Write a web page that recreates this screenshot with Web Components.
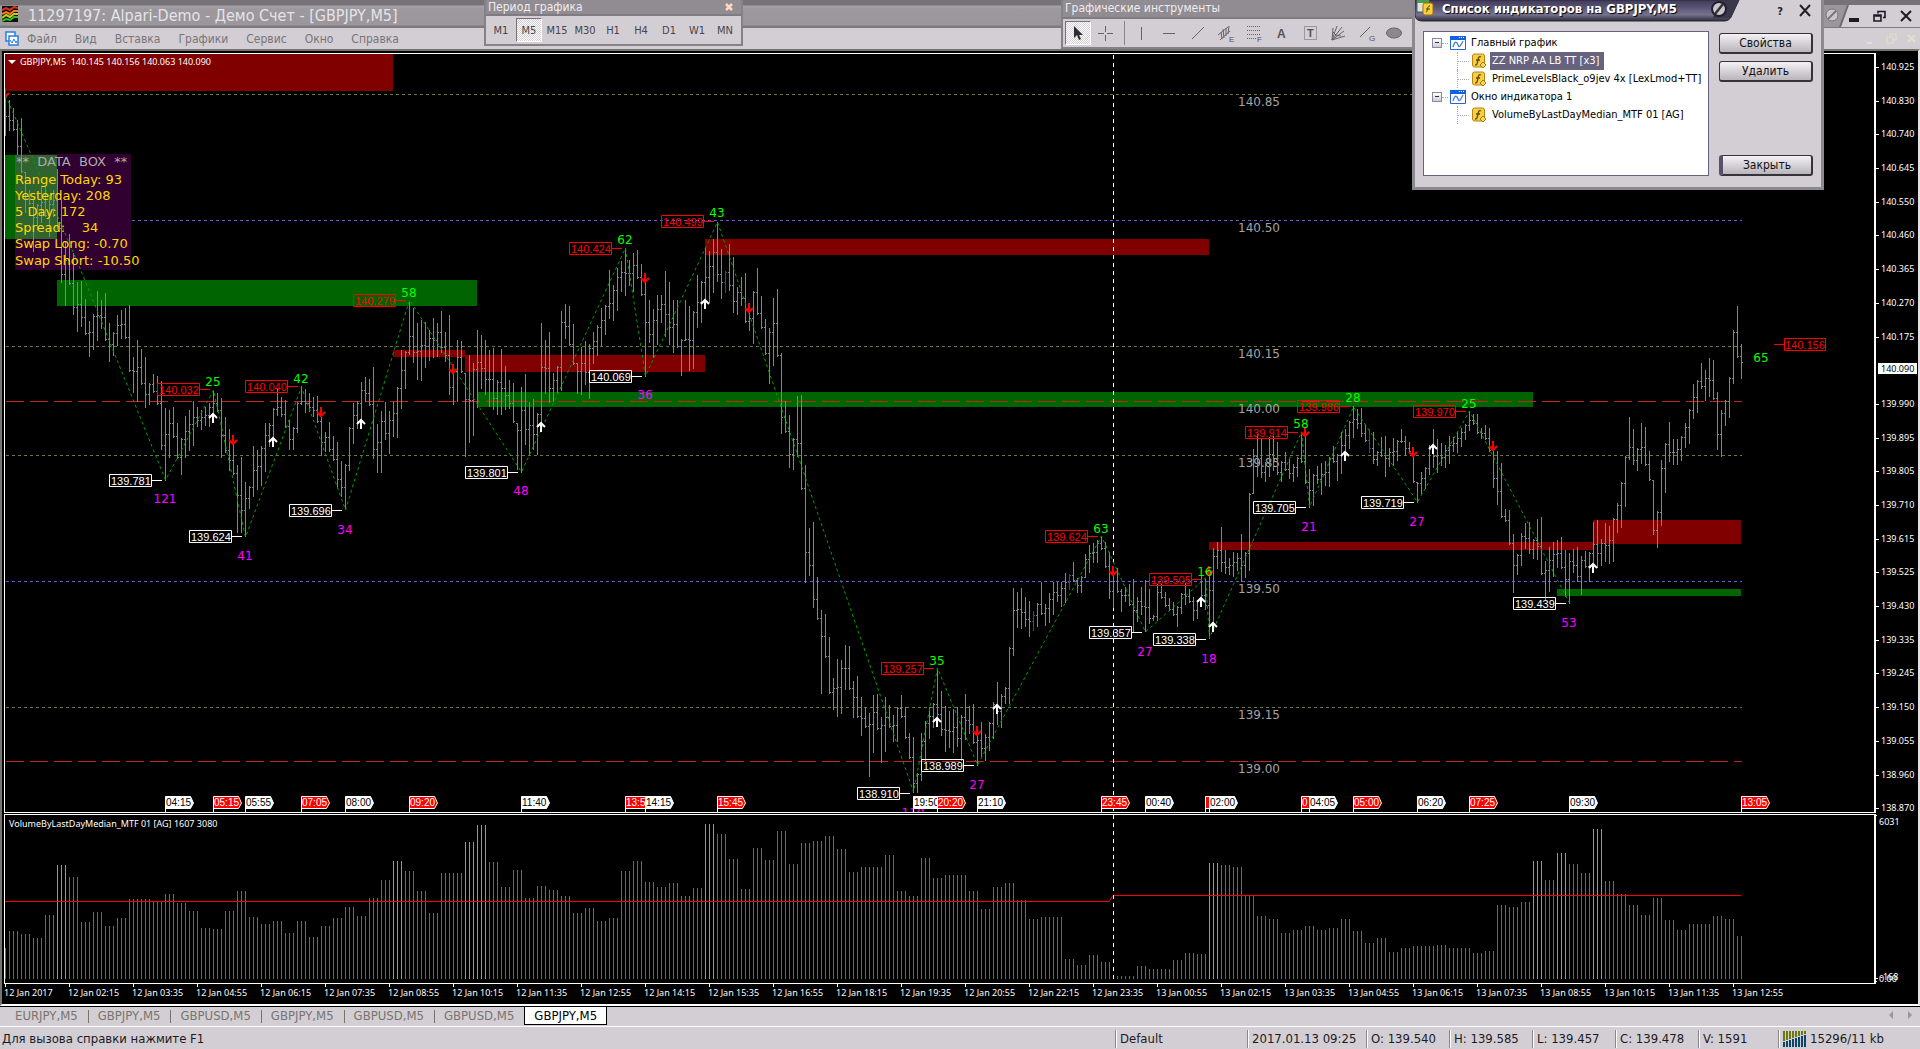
<!DOCTYPE html>
<html lang="ru">
<head>
<meta charset="utf-8">
<title>11297197: Alpari-Demo - Демо Счет - [GBPJPY,M5]</title>
<style>
html,body{margin:0;height:100%;background:#d3ced3}
body{font-family:"DejaVu Sans Condensed","DejaVu Sans",sans-serif;overflow:hidden}
</style>
</head>
<body>
<mt-app></mt-app>
<script>
const define=(name,html,setup)=>customElements.define(name,class extends HTMLElement{
  connectedCallback(){
    if(this.shadowRoot)return;
    const t=document.createElement('template');t.innerHTML=html;
    this.attachShadow({mode:'open'}).append(t.content.cloneNode(true));
    if(setup)setup(this.shadowRoot,this);
  }
});
const BTN='button{font:inherit;color:inherit;background:none;border:0;padding:0;margin:0}';

/* ---------- title and menu ---------- */
define('mt-titlebar',`<style>
:host{display:flex;height:28px;box-sizing:border-box;align-items:flex-start;padding:6px 0 0 2px;color:#e6e3e8;font-size:16px;
background:linear-gradient(#767377 0,#767377 5px,#a7a3a8 6px,#9c989d 9px,#9a969b 25px,#7d7a7f 26px,#7d7a7f 28px)}
svg{width:16px;height:16px;margin-right:10px}
h1{margin:0;font:inherit;line-height:20px;flex:1;white-space:nowrap}
.ctl{display:flex;align-items:flex-start;height:22px;background:#d3ced3;margin-top:-1px}
${BTN} .ctl button{width:26px;height:22px}.ctl svg{margin:0;width:26px;height:22px;display:block}
.ctl .knob{width:40px;height:22px;margin-right:-10px}
</style>
<svg viewBox="0 0 16 16"><rect width="16" height="16" fill="#111"/><g fill="none" stroke-width="2"><path d="M0 4l4-2 4 2 4-3 4 1" stroke="#e03020"/><path d="M0 8l4-2 4 2 4-3 4 0" stroke="#f08020"/><path d="M0 12l4-3 4 2 4-3 4 0" stroke="#c0d020"/><path d="M0 15l4-2 4 1 4-3 4 0" stroke="#30c020"/></g></svg>
<h1>11297197: Alpari-Demo - Демо Счет - [GBPJPY,M5]</h1>
<div class="ctl">
<svg class="knob" viewBox="0 0 40 22"><path d="M0 0h36l-8 22h-28z" fill="#9a969b"/><path d="M36 0l-8 22" stroke="#6f6c72" stroke-width="2"/><circle cx="20" cy="10" r="6" fill="#c9c6cc" stroke="#777"/><path d="M16 14l8-8" stroke="#777" stroke-width="2"/></svg>
<button aria-label="Свернуть"><svg viewBox="0 0 26 22"><path d="M7 13h10v4h-10z" fill="#1b1b25"/></svg></button>
<button aria-label="Развернуть"><svg viewBox="0 0 26 22"><path d="M10 8.500v-2h7v6h-2M6 10h7v6h-7zM6 11h7" fill="none" stroke="#1b1b25" stroke-width="1.600"/></svg></button>
<button aria-label="Закрыть"><svg viewBox="0 0 26 22"><path d="M7 6l10 10M17 6l-10 10" stroke="#1b1b25" stroke-width="2"/></svg></button>
</div>`);

define('mt-menubar',`<style>
:host{display:flex;height:21px;align-items:center;padding-left:5px;font-size:12px;color:#77737a;background:#d3ced3}
svg{width:14px;height:15px;margin-right:8px}nav{display:flex;gap:18px;flex:1}${BTN}
span{color:#e2dfc8;font-size:11px;display:flex;gap:6px;padding-right:1px}span svg{margin:0}
</style>
<svg viewBox="0 0 14 15"><rect x="1" y="1" width="9" height="9" fill="#fff" stroke="#2a7de0" stroke-width="1.500"/><rect x="4" y="5" width="9" height="9" fill="#fff" stroke="#2a7de0" stroke-width="1.500"/><path d="M5 9l2 3 2-4 2 4 1-2" fill="none" stroke="#2a7de0"/></svg>
<nav><button>Файл</button><button>Вид</button><button>Вставка</button><button>Графики</button><button>Сервис</button><button>Окно</button><button>Справка</button></nav>
<span aria-hidden="true"><svg viewBox="0 0 14 15"><path d="M2 12h5" stroke="#e2e0ca" stroke-width="2"/></svg><svg viewBox="0 0 14 15"><path d="M5 5v-2h6v6h-2M2 6h6v6h-6z" fill="none" stroke="#e2e0ca"/></svg><svg viewBox="0 0 14 15"><path d="M3 4l7 7M10 4l-7 7" stroke="#e2e0ca" stroke-width="2"/></svg></span>`);

/* ---------- floating toolbars ---------- */
define('mt-toolbar',`<style>
:host{display:block;background:#d3ced3;border:2px solid #858188;border-top:0;box-sizing:border-box}
header{display:flex;justify-content:space-between;background:#918c92;color:#f0edf0;font-size:12px;padding:0 8px 0 2px;border-bottom:2px solid #7f7b81}
:host header{height:var(--head,14px);line-height:var(--head,14px)}
.row{display:flex;align-items:center;padding:2px 0 2px 1px;height:24px}
${BTN} button{color:#ffd9c8}button svg{display:block}
button[hidden]{display:none}
</style><header><span></span><button hidden aria-label="Закрыть"><svg width="8" height="12" viewBox="0 0 8 12"><path d="M1 3l6 6M7 3l-6 6" stroke="#ffd9c8" stroke-width="2.500"/></svg></button></header><div class="row"><slot></slot></div>`,
(r,h)=>{r.querySelector('span').textContent=h.getAttribute('heading');if(h.hasAttribute('closable'))r.querySelector('button').hidden=false;});

define('mt-tool',`<style>
:host{display:block}${BTN} button{width:28px;height:24px;font-size:11px;color:#48444a;display:flex;align-items:center;justify-content:center;box-sizing:border-box}
:host([active]) button{width:26px;margin:0 1px;border:1px solid;border-color:#77747a #fff #fff #77747a;background:repeating-conic-gradient(#fff 0 25%,#d3ced3 0 50%) 0 0/2px 2px}
</style><button><slot></slot></button>`);

define('mt-glyph',`<style>:host{display:block;width:20px;height:20px}svg{display:block;width:20px;height:20px}text{font:10px "Liberation Sans",sans-serif;fill:#55515a;stroke:none}</style><svg viewBox="0 0 20 20" fill="none" stroke="#66626a"></svg>`,
(r,h)=>{const g={
pointer:'<path d="M6 3v12l3-3 2 5 2-1-2-4h4z" fill="#2e2c33" stroke="none"/>',
cross:'<path d="M9.500 3v6M9.500 12v6M2 10.500h6M11 10.500h6"/>',
v:'<path d="M8.500 4v13"/>',h:'<path d="M2 10.500h12"/>',d:'<path d="M3 16l12-12"/>',
ch:'<path d="M1 12l10-8M3 17l10-9M4 9l1 7M6 6l1 9M9 5v8M12 3l-1 8"/><text x="12" y="19" style="font-size:8px">E</text>',
fib:'<path d="M2 3.500h14M2 7.500h14M2 11.500h14M2 15.500h9" stroke-dasharray="1 1"/><text x="12" y="19" style="font-size:8px">F</text>',
a:'<text x="4" y="15" style="font-size:12px;font-weight:bold">A</text>',
t:'<path d="M3.500 3.500h12v13h-12z" stroke-dasharray="1 1"/><text x="6" y="14" style="font-size:11px;font-weight:bold">T</text>',
fan:'<path d="M3 17l1-12M3 17l5-14M3 17l10-13M3 17l12-9M3 17l13-4M4 9l3 3 5 1"/>',
g:'<path d="M3 14l10-10"/><text x="12" y="18" style="font-size:8px">G</text>',
o:'<ellipse cx="9" cy="10" rx="7.500" ry="5" fill="#8b8990"/>'};
r.querySelector('svg').innerHTML=g[h.getAttribute('name')];});

/* ---------- dialog ---------- */
define('mt-push',`<style>:host{display:block}button{width:94px;height:21px;padding:0;font:12px "DejaVu Sans Condensed","DejaVu Sans",sans-serif;color:#111;border:1px solid #35323c;border-width:1px 2px 2px 1px;border-radius:3px;background:linear-gradient(#f4f2f4,#d9d6da 45%,#b9b5bb)}
:host([primary]) button{border-left:4px solid #56516a}</style><button><slot></slot></button>`);

define('mt-tree',`<style>
:host{display:block;background:#fff;border:1px solid #67627e;font-size:12px;color:#000;padding:2px 0 0 8px}
ul{list-style:none;margin:0;padding:0}li{white-space:nowrap}
.r{display:flex;align-items:center;height:18px}
.box{width:8px;height:8px;flex:none;border:1px solid #88a;background:linear-gradient(#fff,#ccc);position:relative}
.box:after{content:"";position:absolute;left:2px;top:3px;width:4px;height:1px;background:#333}
.dot{width:6px;border-top:1px dotted #aaa;flex:none}
svg{width:16px;height:16px;flex:none;margin:0 5px 0 2px}
ul ul{margin-left:25px}ul ul .dot{width:11px;border-left:0}ul ul .r{border-left:1px dotted #aaa;}
ul ul svg{margin:0 3px 0 2px}
.t{line-height:18px;padding:0 2px;font-size:11px}.sel{background:#67627e;color:#fff;padding-right:5px}
</style><ul role="tree"></ul>`,r=>{
const win='<svg viewBox="0 0 16 16"><path d="M.500 1.500h15v13h-15z" fill="#fff" stroke="#2265d8"/><path d="M0 1h16v4h-16z" fill="#1560e0"/><path d="M9 2h1v1h-1zM11 2h1v1h-1zM13 2h1v1h-1z" fill="#fff"/><path d="M3 12c2-7 4-5 5-2s2 2 5-4" fill="none" stroke="#4a80d0" stroke-width="1.300"/></svg>';
const fn='<svg viewBox="0 0 16 16"><rect x="1.500" y="1" width="12" height="13" rx="2" fill="#f5cf45" stroke="#b8860b"/><path d="M10 4c-2-1-2.500 0-3 3l-1 4c0 1-1 1-2 1M5 7h4" fill="none" stroke="#6b4a00" stroke-width="1.300"/><path d="M12 9l3 3-3 3-3-3z" fill="#f7d85a" stroke="#a87a00"/></svg>';
const kid=(t,s)=>`<li role="treeitem"><div class="r"><span class="dot"></span>${fn}<span class="t${s?' sel':''}">${t}</span></div></li>`;
const top=(t,k)=>`<li role="treeitem"><div class="r"><span class="box"></span><span class="dot"></span>${win}<span class="t" style="padding:0">${t}</span></div><ul role="group">${k}</ul></li>`;
r.querySelector('ul').innerHTML=top('Главный график',kid('ZZ NRP AA LB TT [x3]',1)+kid('PrimeLevelsBlack_o9jev 4x [LexLmod+TT]'))+top('Окно индикатора 1',kid('VolumeByLastDayMedian_MTF 01 [AG]'));});

define('mt-dialog',`<style>
:host{display:flex;flex-direction:column;width:412px;height:190px;box-sizing:border-box;background:#d3ced3;border:3px solid #8d8991;border-top:0}
header{display:flex;height:31px;align-items:flex-start}
.cap{position:relative;width:326px;height:22px;flex:none}
.cap>svg{position:absolute;inset:0;width:326px;height:22px}
h2{position:relative;margin:0;padding-left:27px;font-size:13px;line-height:17px;color:#fff;text-shadow:1px 1px 1px #000;font-weight:bold}
${BTN} header button{width:26px;height:24px;color:#222}
.help{margin-left:26px;font-weight:bold;font-size:11px;line-height:14px}
.help,.x{flex:none}header svg{display:block}
main{display:flex;gap:10px;flex:1;padding:0 8px 11px 8px}
mt-tree{flex:1}
.b{display:flex;flex-direction:column;gap:6px;padding-top:1px}.b :last-child{margin-top:auto}
</style>
<header><div class="cap"><svg viewBox="0 0 326 22"><defs><linearGradient id="c" x1="0" y1="0" x2="0" y2="1"><stop offset="0" stop-color="#3f3a58"/><stop offset=".300" stop-color="#55506f"/><stop offset=".700" stop-color="#77738f"/><stop offset="1" stop-color="#2c2938"/></linearGradient></defs><path d="M0 0h324l-8 17q-2 4-6 4h-303q-7 0-7-7z" fill="url(#c)" stroke="#2c2938"/><path d="M304 0h20l-8 18h-18z" fill="#3b374b"/><circle cx="304" cy="9" r="7" fill="#c9c6cc" stroke="#221f2c" stroke-width="2"/><path d="M300 14l8-10" stroke="#333" stroke-width="2.500"/><rect x="2" y="0" width="12" height="12" fill="#dfe8d8" stroke="#557"/><path d="M2 0h12v3h-12z" fill="#4a9a50"/><rect x="8" y="3" width="10" height="12" rx="2" fill="#f5cf45" stroke="#a07000"/><path d="M15 6c-3-1-2 6-4 6M11 9h4" fill="none" stroke="#5a3f00"/></svg><h2>Список индикаторов на GBPJPY,M5</h2></div>
<button class="help">?</button><button class="x" aria-label="Закрыть"><svg width="26" height="24" viewBox="0 0 26 24"><path d="M7 5l10 11M17 5l-10 11" stroke="#222" stroke-width="2"/></svg></button></header>
<main><mt-tree></mt-tree><div class="b"><mt-push>Свойства</mt-push><mt-push>Удалить</mt-push><mt-push primary>Закрыть</mt-push></div></main>`);

/* ---------- chart data ---------- */
/* high/low pairs in thirds of a pixel below the block's base line */
const feed=[
[0,'292 407 300 392 325 392 360 465 355 520 517 640 570 615 600 755 612 690 558 670 560 650 585 710 570 650 507 690 600 848 725 919 702 855 760 945'],
[260,'65 215 62 202 117 225 182 290 162 270 93 243 120 207 98 242 188 305 215 288 165 257 150 238 145 238 135 335 290 398 240 425 267 375 290 443 370 435 342 400 348 435 362 570 443 662 450 593 440 535 490 598 533 645 467 593 450 573 423 557 440 500 450 510 440 497 430 500 393 490 398 455 415 593 470 580 507 632 553 645 615 818 590 818 667 830 678 748 557 710 570 690 558 678 490 637 490 560 443 545 383 468 410 470 420 505 480 570 500 570 425 520 378 435 388 458 400 455 410 470 408 490 470 587 515 575 485 575 528 602 545 683 603 710 613 750 502 633 430 552 423 507 365 490 350 425 358 438 322 597 492 638 453 638 427 540 453 582 425 530 380 533 270 447 273 388 125 285 143 310 188 360 180 362 185 325 210 302 173 293 190 290 152 280 217 307 165 405 327 435 240 425 242 340 340 590 285 548 310 528 210 445 225 387 240 405 270 440 263 450 360 465 267 465 318 450 360 448 370 490 490 630 382 640 342 555 425 585 417 570 458 585 188 500 240 402 215 428 338 425 318 400 152 392 132 237 137 258 193 315 308 403 262 405 243 375 252 417 215 312 195 287 143 258 135 225'],
[200,'210 357 255 363 205 333 182 277 145 288 180 258 158 275 150 237 192 288 245 530 300 430 327 473 285 435 285 370 213 410 245 435 300 458 300 443 417 527 300 423 318 513 333 507 225 385 242 370 145 310 153 310 117 278 65 247 147 297 213 278 132 272 170 338 260 345 230 318 218 368 335 393 273 432 205 345 287 387 357 465 383 552 293 497 267 470 458 702 603 698 645 803 713 810 588 770 585 870 795 1148'],
[500,'83 228 67 323 230 360 330 582 342 473 410 582 533 630 477 650 480 642 435 570 437 570 543 653 528 655 590 708 620 685 640 830 585 760 582 690 650 790 590 755 615 683 645 725 622 727 585 653 622 717 700 777 710 880 820 880 698 843 662 783 622 717 608 685 505 682 573 707 618 755 632 745 627 758 620 740 645 783 582 720 618 702 612 733 700 797 665 772 702 782 665 752 605 718 545 675 582 685 560 612 440 612 263 467 277 385 263 387 290 380 303 410 333 393 310 380 245 345 313 377 280 368 245 345 247 307 247 320 220 310 222 270 187 245 235 280 227 280 162 235 135 220 128 190 120 190 108 150 125 203 155 297 218 323 205 280 267 335 260 305 252 318 237 397 290 367 262 345 240 397 267 372 345 362 253 362 253 297 277 322 295 333 307 347 318 380 280 342 250 315 267 308 292 362 300 357 225 320 237 330 210 417 145 395 125 207 82 215 150 222 175 225 157 232 160 213 102 245 157 233'],
[360,'398 633 268 402 223 350 235 353 305 367 232 350 227 333 245 345 303 365 275 333 298 357 313 365 292 350 218 310 230 373 327 443 342 437 318 372 310 405 303 378 290 380 257 310 283 362 217 342 207 303 183 267 138 233 147 207 145 232 192 247 207 280 215 312 273 317 230 290 228 350 265 322 233 317 240 303 207 250 228 287 245 278 283 368 367 428 337 403 320 388 255 345 207 325 237 340 250 317 255 323 227 312 230 275 217 280 205 262 192 240 153 213 163 195 163 222 203 237 195 240 205 275 268 385 272 435 310 475 447 487 450 555 522 698 582 645 518 617 490 568 485 582 537 597 478 600 472 645 603 722 562 695 545 650 540 623 530 627 570 712 580 732 567 640 560 665 588 705 573 623 575 665 485 610 480 623 537 617 490 605 497 613 475 607 430 520 367 503 288 440 170 300 207 315 265 332 190 312 202 318 272 363 360 525 453 563 300 497 250 398 187 307 237 315 238 315 227 303 190 265 147 252 72 177'],
[290,'270 370 218 297 240 333 203 320 210 330 307 480 360 502 330 407 262 384 120 282 48 203 162 266']];
const bars=[];
for(const [base,list] of feed){const n=list.split(' ').map(Number);for(let k=0;k<n.length;k+=2)bars.push([Math.round(base+n[k]/3),Math.round(base+n[k+1]/3)]);}
const clamp=(v,a,b)=>Math.max(a,Math.min(b,v));
const closeOf=i=>{const [t,b]=bars[i],n=bars[i+1]||bars[i];return clamp(Math.round((n[0]+n[1])/2),t+1,b-2);};
const barX=i=>5+4*i;
const doji=new Set([180,257,266,341]);

define('mt-price-pane',`<style>
:host{display:block;overflow:hidden;border:1px solid #fff;border-right-width:2px;min-width:0}
svg{display:block;width:100%;height:100%}
text{font-family:"DejaVu Sans",sans-serif;font-size:12px}
.box{font-family:"Liberation Sans",sans-serif;font-size:11px}
.flag{font-family:"Liberation Sans",sans-serif;font-size:10px}
.head{font:9px "Noto Sans","Liberation Sans",sans-serif;fill:#fff;white-space:pre}
.data{font-size:13px;fill:#ffd700;white-space:pre}
</style><svg><g transform="translate(-5,-54)"></g></svg>`,r=>{
let s='';
const R=(x,y,x2,y2,c)=>s+=`<rect x="${x}" y="${y}" width="${x2-x}" height="${y2-y}" fill="${c}"/>`;
const red='#800000',green='#006400';
R(5,54,393,91,red);R(57,280,477,306,green);R(393,350,465,357,red);R(465,355,705,372,red);R(477,392,1533,407,green);
R(705,239,1209,255,red);R(1209,542,1593,550,red);R(1593,520,1741,544,red);R(1557,589,1741,596,green);
const lv=[[140.85,'#6b7a35'],[140.5,'#6a5acd'],[140.15,'#6b7a35'],[140,'#c02828'],[139.85,'#6b7a35'],[139.5,'#6a5acd'],[139.15,'#6b7a35'],[139,'#c02828']];
const yOf=p=>Math.round(400.5+(140-p)*360.4);
for(const [p,c] of lv)s+=`<path shape-rendering="crispEdges" d="M6 ${yOf(p)+.5}H1742" stroke="${c}" stroke-dasharray="${p%1?'3 3':'18 6'}"/>`;
R(15,154,131,270,'#2f0030');R(5,155,57,239,green);R(15,155,57,239,'#2f642f');
for(const [p] of lv)s+=`<text x="1238" y="${yOf(p)+12}" fill="#a4a4a4">${p.toFixed(2)}</text>`;
s+='<path d="M1113.500 55V812" stroke="#fff" stroke-dasharray="4 4" shape-rendering="crispEdges"/>';
let d='',dd='';
bars.forEach(([t,b],i)=>{const x=barX(i),c=closeOf(i);let q=`M${x} ${t}h1V${b}h-1z`;q+=`M${x+1} ${c}h1v1h-1z`;if(i)q+=`M${x-1} ${clamp(closeOf(i-1),t,b-1)}h1v1h-1z`;if(doji.has(i))dd+=q;else d+=q;});
s+=`<path d="${d}" fill="#778899" shape-rendering="crispEdges"/><path d="${dd}" fill="#483d8b" shape-rendering="crispEdges"/>`;
s+='<path d="M5 95L79 267L165 480L213 390L245 537L301 387L345 510L409 300L521 472L625 248L645 376L717 222L913 792L937 668L977 765L1101 536L1145 632L1205 578L1209 638L1301 432L1309 507L1353 407L1417 502L1469 411L1569 603" transform="translate(.5,0)" fill="none" stroke="#00a000" stroke-dasharray="3 3"/>';
for(const [x,y] of [[213,418],[273,442],[361,424],[541,427],[705,304],[937,722],[997,709],[1201,602],[1213,627],[1345,456],[1433,449],[1593,568]])
 s+=`<path d="M${x} ${y+5}v-9M${x-4} ${y}l4-4 4 4" fill="none" stroke="#fff" stroke-width="2"/>`;
for(const [x,y] of [[5,93],[233,440],[321,412],[453,369],[645,278],[749,308],[977,731],[1113,571],[1209,571],[1305,432],[1413,452],[1493,446]])
 s+=`<path d="M${x} ${y-5}v9M${x-4} ${y}l4 4 4-4" fill="none" stroke="#f00" stroke-width="2"/>`;
const pt=(px,py,p,n,ny,c,nc)=>{s+=`<path d="M${px-13} ${py+.5}h10M${px-55.5} ${py-5.5}h42v12h-42z" fill="none" stroke="${c}"/><text class="box" x="${px-54}" y="${py+5}" fill="${c}">${p}</text><text x="${px}" y="${ny+4}" text-anchor="middle" fill="${nc}">${n}</text>`;};
for(const a of [[165,480,'139.781',121,499],[245,536,'139.624',41,556],[345,510,'139.696',34,530],[521,472,'139.801',48,491],[645,376,'140.069',36,395],[913,793,'138.910',110,813],[977,765,'138.989',27,785],[1145,632,'139.357',27,652],[1209,639,'139.338',18,659],[1309,507,'139.705',21,527],[1417,502,'139.719',27,522],[1569,603,'139.439',53,623]])pt(...a,'#fff','#f0f');
for(const a of [[213,389,'140.032',25,382],[301,386,'140.040',42,379],[409,300,'140.279',58,293],[625,248,'140.424',62,240],[717,221,'140.499',43,213],[937,668,'139.257',35,661],[1101,536,'139.624',63,529],[1205,579,'139.505',16,572],[1301,432,'139.914',58,424],[1353,406,'139.986',28,398],[1469,411,'139.970',25,404]])pt(...a,'#f00','#0f0');
s+='<path d="M1774 344.500h10M1784.500 338.500h41v12h-41z" fill="none" stroke="#f00"/><text class="box" x="1785" y="349" fill="#f00">140.156</text><text x="1761" y="362" text-anchor="middle" fill="#0f0">65</text>';
for(const [x,t,c] of [[165,'04:15'],[213,'05:15',1],[245,'05:55'],[301,'07:05',1],[345,'08:00'],[409,'09:20',1],[521,'11:40'],[625,'13:5',1],[645,'14:15'],[717,'15:45',1],[913,'19:50'],[937,'20:20',1],[977,'21:10'],[1101,'23:45',1],[1145,'00:40'],[1205,'',1],[1209,'02:00'],[1301,'0',1],[1309,'04:05'],[1353,'05:00',1],[1417,'06:20'],[1469,'07:25',1],[1569,'09:30'],[1741,'13:05',1]])
 s+=`<path d="M${x+.5} 812V796.500h25l3 6.500-3 5.500h-25" fill="${c?'#f00':'#fff'}" stroke="#fff"/><text class="flag" x="${x+1}" y="806" fill="${c?'#fff':'#000'}">${t}</text>`;
s+='<path d="M8 60h8l-4 4z" fill="#fff"/><text class="head" x="20" y="65">GBPJPY,M5  140.145 140.156 140.063 140.090</text>';
s+='<text class="data" x="16" y="166" style="fill:#b0a8b0">**  DATA  BOX  **</text>';
[['Range Today: 93',184],['Yesterday: 208',200],['5 Day: 172',216],['Spread:    34',232],['Swap Long: -0.70',248],['Swap Short: -10.50',265]].forEach(([t,y])=>s+=`<text class="data" x="15" y="${y}">${t}</text>`);
r.querySelector('g').innerHTML=s;});

define('mt-price-axis',`<style>:host{display:block;overflow:hidden}svg{display:block;width:100%;height:100%}text{font:9px "Noto Sans","Liberation Sans",sans-serif;fill:#fff}</style><svg><g transform="translate(-1876,-53)"></g></svg>`,r=>{
let s='';
for(const p of [140.925,140.83,140.74,140.645,140.55,140.46,140.365,140.27,140.175,139.99,139.895,139.805,139.71,139.615,139.525,139.43,139.335,139.245,139.15,139.055,138.96,138.87]){const y=Math.round(400.5+(140-p)*360.4);s+=`<path d="M1876 ${y+.5}h3" stroke="#fff"/><text x="1881" y="${y+3}">${p.toFixed(3)}</text>`;}
s+='<rect x="1878" y="363" width="39" height="11" fill="#fff"/><text x="1881" y="372" style="fill:#000">140.090</text>';
r.querySelector('g').innerHTML=s;});

/* tops of three-bar groups, in thirds of a pixel under y=780; "g" marks a group above the median */
const groups='453 462 474 405 255g 291 426 396 438 414 357 357 365 342 369 393 444 447 393 333 411 432 423 459 423 471 438 414 381 408 354 300 243g 273 333 399 279 279 186g 135g 246 321 270 354 318 330 348 399 384 423 414 273 243 306 321 309 348 324 132g 162 237 327 204 240 153 252 189 183 168 207 276 261 261 225 333 348 234 294 285 285 333 387 321 309 360 417 411 411 537 555 525 546 588 588 558 567 567 540 519 522 249g 255 261 348 408 417 459 450 438 450 444 417 453 489 474 516 504 498 498 495 504 504 519 513 375 381 366 243g 300 219g 252 279 147g 303 342 375 405 354 420 450 432 432 408 417 468'.split(' ');
define('mt-volume-pane',`<style>
:host{display:block;overflow:hidden;border:1px solid #fff;border-right-width:2px;min-width:0}
svg{display:block;width:100%;height:100%}text{font:9px "Noto Sans","Liberation Sans",sans-serif;fill:#fff}
</style><svg><g transform="translate(-5,-815)"></g></svg>`,r=>{
let g='M5 948h1V979h-1z',h='';
groups.forEach((v,k)=>{const y=Math.round(780+parseInt(v)/3);for(let j=0;j<3;j++){const i=1+3*k+j;if(i>434)break;const q=`M${barX(i)} ${y}h1V979h-1z`;if(v.endsWith('g'))h+=q;else g+=q;}});
r.querySelector('g').innerHTML=`<path d="${g}" fill="#696969" shape-rendering="crispEdges"/><path d="${h}" fill="#0f0" shape-rendering="crispEdges"/><path d="M5 901.500H1109L1113 895.500H1741" fill="none" stroke="#f00"/><path d="M1113.500 815V980" stroke="#fff" stroke-dasharray="4 4" shape-rendering="crispEdges"/><text x="9" y="827">VolumeByLastDayMedian_MTF 01 [AG] 1607 3080</text>`;});
define('mt-volume-axis',`<style>:host{display:block;overflow:hidden}svg{display:block;width:100%;height:100%}text{font:9px "Noto Sans","Liberation Sans",sans-serif;fill:#fff}</style><svg><g transform="translate(-1876,-814)"><path d="M1876 815.500h1M1876 978.500h2M1876 981.500h1" stroke="#fff"/><text x="1879" y="825">6031</text><text x="1879" y="982">0.00</text><text x="1880" y="980">-168</text></g></svg>`);
define('mt-time-axis',`<style>:host{display:block;overflow:hidden}svg{display:block;width:100%;height:100%}text{font:9px "Noto Sans","Liberation Sans",sans-serif;fill:#fff}</style><svg><g transform="translate(-4,-984)"></g></svg>`,r=>{
let s='';for(let k=0;k<28;k++){const m=55+80*k,p=n=>String(n).padStart(2,'0');const t=k?`${12+Math.floor(m/1440)} Jan ${p(Math.floor(m/60)%24)}:${p(m%60)}`:'12 Jan 2017';s+=`<path d="M${5+64*k+.5} 984v3" stroke="#fff"/><text x="${4+64*k}" y="996">${t}</text>`;}
r.querySelector('g').innerHTML=s;});

define('mt-chart',`<style>
:host{display:grid;grid-template-columns:minmax(0,1fr) 42px;grid-template-rows:minmax(0,1fr) 170px 20px;background:#000;padding:2px 0 0 2px;border-left:2px solid #77736f;border-right:2px solid #e4e1e4;min-height:0}
mt-price-pane{margin-bottom:1px}mt-time-axis{grid-column:1/3}
</style><mt-price-pane></mt-price-pane><mt-price-axis></mt-price-axis><mt-volume-pane></mt-volume-pane><mt-volume-axis></mt-volume-axis><mt-time-axis></mt-time-axis>`);

/* ---------- tabs and status bar ---------- */
define('mt-tabs',`<style>
:host{display:flex;height:19px;border-top:1px solid #000;border-bottom:1px solid #fff;padding-left:5px;font-size:13px;color:#77746f;background:#d3ced3}
${BTN} button{padding:0 10px;line-height:18px;height:18px;position:relative}
button+button:before{content:"";position:absolute;left:0;top:3px;height:13px;border-left:1px solid #77746f}
button.on{background:#fff;color:#000;border:1px solid #000;border-top:0;padding:0 9px}button.on:before{display:none}
i{flex:1}svg{width:30px;height:18px;margin-right:2px}
</style><button>EURJPY,M5</button><button>GBPJPY,M5</button><button>GBPUSD,M5</button><button>GBPJPY,M5</button><button>GBPUSD,M5</button><button>GBPUSD,M5</button><button class="on">GBPJPY,M5</button><i></i><svg viewBox="0 0 30 18"><path d="M5 4v8l-4-4zM20 4v8l4-4z" fill="#9a969b"/></svg>`);
define('mt-status',`<style>
:host{display:flex;height:22px;align-items:center;font-size:13px;color:#1c1a1e;background:#d3ced3;white-space:nowrap;box-sizing:border-box}
p{margin:0;flex:1;padding-left:2px}
span{box-sizing:border-box;width:83px;height:18px;line-height:18px;margin-top:2px;padding-left:4px;border-left:1px solid #8a868c;box-shadow:inset 1px 0 #fff}
.w{width:132px}.d{width:119px}.v{width:80px}.n{width:142px;display:flex;align-items:center;gap:3px}svg{width:24px;height:16px}
</style><p>Для вызова справки нажмите F1</p><span class="w">Default</span><span class="d">2017.01.13 09:25</span><span>O: 139.540</span><span>H: 139.585</span><span>L: 139.457</span><span>C: 139.478</span><span class="v">V: 1591</span><span class="n"><svg viewBox="0 0 24 16"></svg>15296/11 kb</span>`,
r=>{let s='';for(let i=0;i<8;i++){const y=11-i;s+=`<rect x="${i*3}" y="0" width="2" height="${y-1}" fill="#6b7a10"/><rect x="${i*3}" y="${y}" width="2" height="${16-y}" fill="#0a4468"/>`;}r.querySelector('svg').innerHTML=s;});

define('mt-app',`<style>
:host{display:flex;flex-direction:column;height:100vh;position:relative;overflow:hidden}
mt-titlebar,mt-menubar,mt-tabs,mt-status{flex:none}
mt-chart{flex:1;border-top:2px solid #77736f;border-bottom:2px solid #fff}
.period{position:absolute;left:484px;top:0;width:259px}
.draw{position:absolute;left:1061px;top:0;width:360px;--head:17px}
.sep{width:1px;height:24px;background:#8a868c;margin:0 4px}
mt-dialog{position:absolute;right:96px;top:0}
</style>
<mt-titlebar></mt-titlebar><mt-menubar></mt-menubar><mt-chart></mt-chart><mt-tabs></mt-tabs><mt-status></mt-status>
<mt-toolbar class="period" heading="Период графика" closable><mt-tool>M1</mt-tool><mt-tool active>M5</mt-tool><mt-tool>M15</mt-tool><mt-tool>M30</mt-tool><mt-tool>H1</mt-tool><mt-tool>H4</mt-tool><mt-tool>D1</mt-tool><mt-tool>W1</mt-tool><mt-tool>MN</mt-tool></mt-toolbar>
<mt-toolbar class="draw" heading="Графические инструменты"><mt-tool active><mt-glyph name="pointer"></mt-glyph></mt-tool><mt-tool><mt-glyph name="cross"></mt-glyph></mt-tool><div class="sep"></div><mt-tool><mt-glyph name="v"></mt-glyph></mt-tool><mt-tool><mt-glyph name="h"></mt-glyph></mt-tool><mt-tool><mt-glyph name="d"></mt-glyph></mt-tool><mt-tool><mt-glyph name="ch"></mt-glyph></mt-tool><mt-tool><mt-glyph name="fib"></mt-glyph></mt-tool><mt-tool><mt-glyph name="a"></mt-glyph></mt-tool><mt-tool><mt-glyph name="t"></mt-glyph></mt-tool><mt-tool><mt-glyph name="fan"></mt-glyph></mt-tool><mt-tool><mt-glyph name="g"></mt-glyph></mt-tool><mt-tool><mt-glyph name="o"></mt-glyph></mt-tool></mt-toolbar>
<mt-dialog></mt-dialog>`);
</script>
</body>
</html>
